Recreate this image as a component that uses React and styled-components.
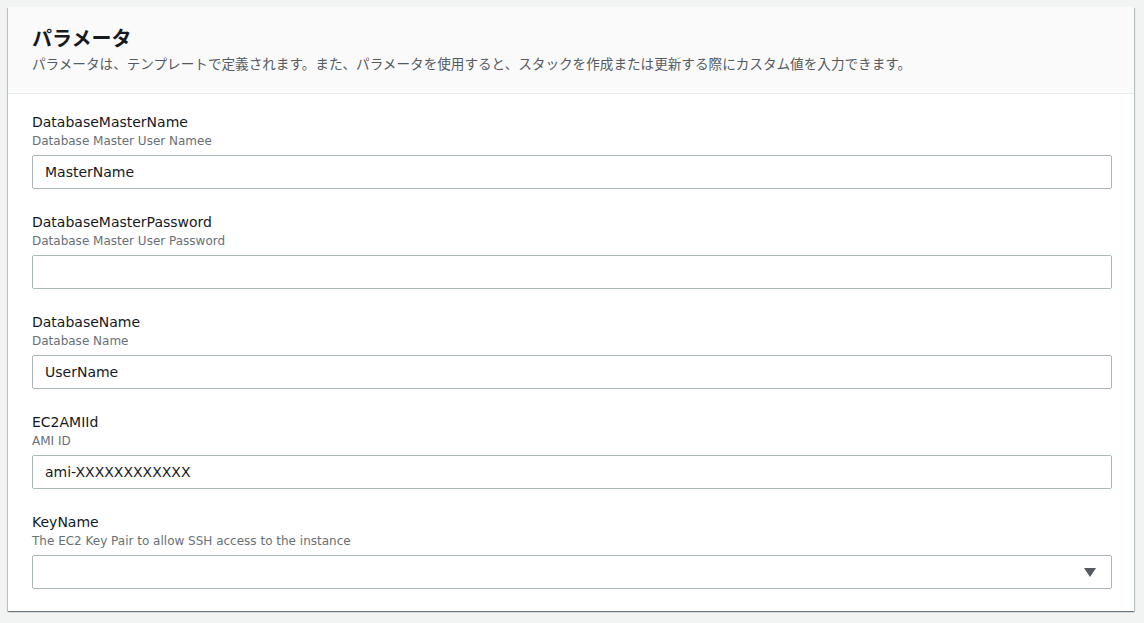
import React from "react";
import styled, { createGlobalStyle } from "styled-components";

const Global = createGlobalStyle`
  html, body { margin: 0; padding: 0; background: #f2f3f3; }
  body {
    padding: 7px 10px 12px 8px;
    font-family: "DejaVu Sans", "Noto Sans CJK JP", sans-serif;
    color: #16191f;
  }
  * { box-sizing: border-box; }
`;

const Card = styled.section`
  background: #fff;
  box-shadow: 0 1px 1px 0 rgba(0, 28, 36, 0.35), 1px 1px 1px 0 rgba(0, 28, 36, 0.18),
    -1px 1px 1px 0 rgba(0, 28, 36, 0.18);
`;

const Header = styled.header`
  background: #fafafa;
  border-bottom: 1px solid #eaeded;
  padding: 17px 24px 20px;
`;

const Title = styled.h2`
  margin: 0;
  font-family: "Noto Sans CJK JP", sans-serif;
  font-size: 20px;
  line-height: 28px;
  font-weight: 700;
  color: #16191f;
`;

const Description = styled.p`
  margin: 1px 0 0;
  font-family: "Noto Sans CJK JP", sans-serif;
  font-size: 13.6px;
  line-height: 20px;
  color: #545b64;
`;

const Body = styled.div`
  padding: 18px 22px 22px 24px;
  display: flex;
  flex-direction: column;
  gap: 23px;
`;

const Field = styled.div`
  display: flex;
  flex-direction: column;
`;

const Label = styled.label`
  font-size: 14px;
  line-height: 20px;
  color: #16191f;
`;

const Hint = styled.span`
  margin-top: 1px;
  font-size: 12px;
  line-height: 16px;
  color: #687078;
`;

const Box = styled.div`
  margin-top: 6px;
  height: 34px;
  border: 1px solid #aab7b8;
  border-radius: 2px;
  background: #fff;
  display: flex;
  align-items: center;
  padding: 0 12px;
  font-size: 14px;
  color: #16191f;
`;

const Value = styled.span`
  flex: 1;
  line-height: 20px;
`;

const Caret = styled.span`
  width: 0;
  height: 0;
  margin-right: 3px;
  border-left: 6px solid transparent;
  border-right: 6px solid transparent;
  border-top: 9px solid #545b64;
`;

const fields = [
  { name: "DatabaseMasterName", hint: "Database Master User Namee", value: "MasterName" },
  { name: "DatabaseMasterPassword", hint: "Database Master User Password", value: "" },
  { name: "DatabaseName", hint: "Database Name", value: "UserName" },
  { name: "EC2AMIId", hint: "AMI ID", value: "ami-XXXXXXXXXXXX" },
  { name: "KeyName", hint: "The EC2 Key Pair to allow SSH access to the instance", value: "", select: true },
];

export default function App() {
  return (
    <>
      <Global />
      <Card>
        <Header>
          <Title>パラメータ</Title>
          <Description>
            パラメータは、テンプレートで定義されます。また、パラメータを使用すると、スタックを作成または更新する際にカスタム値を入力できます。
          </Description>
        </Header>
        <Body>
          {fields.map((f) => (
            <Field key={f.name}>
              <Label>{f.name}</Label>
              <Hint>{f.hint}</Hint>
              <Box>
                <Value>{f.value}</Value>
                {f.select && <Caret />}
              </Box>
            </Field>
          ))}
        </Body>
      </Card>
    </>
  );
}
